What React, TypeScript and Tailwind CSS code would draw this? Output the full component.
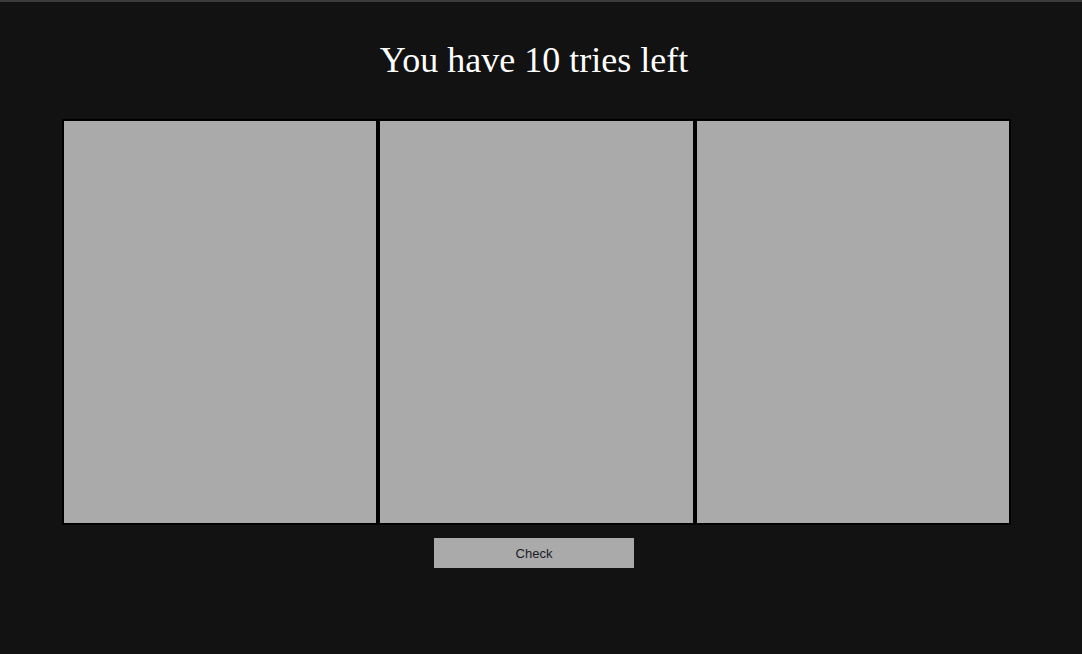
const Panel = () => (
  <div className="h-[406px] border-2 border-black bg-[#aaaaaa]"></div>
);

export default function App() {
  return (
    <div className="min-h-[654px] w-full bg-[#121212] border-t-2 border-[#3b3b3b]">
      <div className="w-[1068px] flex flex-col items-center">
        <h1 className="mt-[38px] text-[36px] leading-[41px] text-white font-['Liberation_Serif',serif]">
          You have 10 tries left
        </h1>
      </div>
      <div className="ml-[62px] mt-[38px] w-[949px] grid grid-cols-3">
        <Panel />
        <Panel />
        <Panel />
      </div>
      <div className="w-[1068px] flex justify-center mt-[13px]">
        <button className="w-[200px] h-[30px] pt-[1px] bg-[#aaaaaa] text-[13px] text-[#1c1c28] font-['Liberation_Sans',Arial,sans-serif]">
          Check
        </button>
      </div>
    </div>
  );
}
